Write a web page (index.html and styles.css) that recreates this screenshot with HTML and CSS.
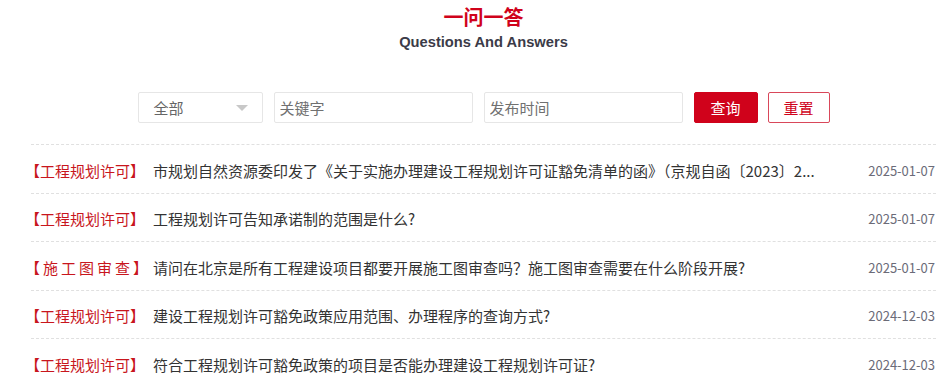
FILE: index.html
```html
<!DOCTYPE html>
<html lang="zh-CN">
<head>
<meta charset="utf-8">
<title>一问一答</title>
<link rel="stylesheet" href="styles.css">
</head>
<body>
<div class="page">
  <div class="header">
    <h1 class="title">一问一答</h1>
    <div class="subtitle">Questions And Answers</div>
  </div>
  <div class="filters">
    <div class="select"><span>全部</span><span class="caret"></span></div>
    <input class="field field-key" type="text" placeholder="关键字">
    <input class="field field-date" type="text" placeholder="发布时间">
    <button class="btn btn-query">查询</button>
    <button class="btn btn-reset">重置</button>
  </div>
  <ul class="list">
    <li class="row"><span class="tag">【工程规划许可】</span><a class="q">市规划自然资源委印发了《关于实施办理建设工程规划许可证豁免清单的函》（京规自函〔2023〕2...</a><span class="date">2025-01-07</span></li>
    <li class="row"><span class="tag">【工程规划许可】</span><a class="q">工程规划许可告知承诺制的范围是什么?</a><span class="date">2025-01-07</span></li>
    <li class="row"><span class="tag tag-wide">【施工图审查】</span><a class="q">请问在北京是所有工程建设项目都要开展施工图审查吗？施工图审查需要在什么阶段开展?</a><span class="date">2025-01-07</span></li>
    <li class="row"><span class="tag">【工程规划许可】</span><a class="q">建设工程规划许可豁免政策应用范围、办理程序的查询方式?</a><span class="date">2024-12-03</span></li>
    <li class="row"><span class="tag">【工程规划许可】</span><a class="q">符合工程规划许可豁免政策的项目是否能办理建设工程规划许可证?</a><span class="date">2024-12-03</span></li>
  </ul>
</div>
</body>
</html>
```

FILE: styles.css
```css
* { box-sizing: border-box; }
html, body { margin: 0; padding: 0; background: #fff; }
body {
  font-family: "Noto Sans CJK SC", "Noto Sans", sans-serif;
  color: #333;
}
.page {
  width: 905px;
  margin-left: 31px;
}
.header {
  text-align: center;
  padding-top: 2px;
}
.title {
  margin: 0;
  font-size: 20px;
  line-height: 30px;
  font-weight: 700;
  color: #d0021b;
}
.subtitle {
  font-family: "Liberation Sans", Arial, sans-serif;
  font-weight: 700;
  font-size: 14.7px;
  line-height: 20px;
  color: #3b3b48;
}
.filters {
  display: flex;
  justify-content: center;
  gap: 11px;
  margin-top: 40px;
  height: 31px;
}
.select {
  width: 125px;
  height: 31px;
  border: 1px solid #e6e6e6;
  border-radius: 2px;
  display: flex;
  align-items: center;
  justify-content: space-between;
  padding: 0 14px 0 15px;
  font-size: 15px;
  color: #666;
}
.caret {
  width: 0;
  height: 0;
  border-left: 6px solid transparent;
  border-right: 6px solid transparent;
  border-top: 6px solid #c8c8c8;
}
.field {
  width: 199px;
  height: 31px;
  border: 1px solid #e6e6e6;
  border-radius: 2px;
  padding: 0 5px;
  font-family: inherit;
  font-size: 15px;
  color: #333;
  outline: none;
}
.field::placeholder { color: #707070; }
.btn {
  height: 31px;
  border-radius: 2px;
  font-family: inherit;
  font-size: 15px;
  padding: 0;
  cursor: pointer;
}
.btn-query {
  width: 64px;
  background: #d0021b;
  border: 1px solid #d0021b;
  color: #fff;
}
.btn-reset {
  width: 62px;
  margin-left: -1px;
  background: #fff;
  border: 1px solid #d9475a;
  color: #d0021b;
}
.list {
  list-style: none;
  margin: 21px 0 0;
  padding: 0;
}
.row {
  display: flex;
  align-items: center;
  height: 48.5px;
  border-top: 1px dashed #e0e0e0;
  padding-top: 3px;
}
.tag {
  flex: none;
  width: 120px;
  margin-left: -6px;
  font-size: 15px;
  color: #c8161d;
  white-space: nowrap;
}
.tag-wide { letter-spacing: 3px; }
.q {
  flex: 1;
  min-width: 0;
  margin-left: 8px;
  margin-right: 40px;
  font-size: 15px;
  color: #333;
  white-space: nowrap;
  overflow: hidden;
}
.date {
  flex: none;
  font-family: "Noto Sans CJK SC", sans-serif;
  font-size: 13px;
  color: #6b6b78;
  padding-right: 1px;
}
```
